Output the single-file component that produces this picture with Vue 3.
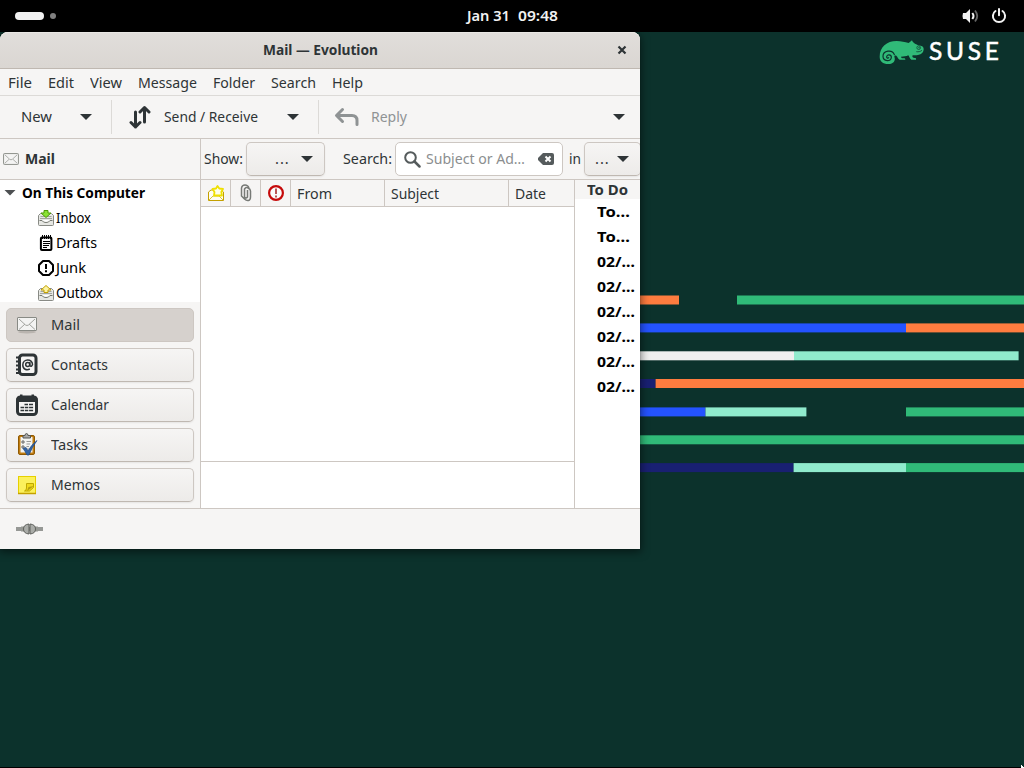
<script setup>
const menus = [['File', 24], ['Edit', 26], ['View', 32], ['Message', 59], ['Folder', 42], ['Search', 45], ['Help', 31]]
const folders = [['inbox', 'Inbox', 35], ['drafts', 'Drafts', 41], ['junk', 'Junk', 30], ['outbox', 'Outbox', 47]]
const views = [['mail', 'Mail', 29], ['contacts', 'Contacts', 57], ['calendar', 'Calendar', 58], ['tasks', 'Tasks', 37], ['memos', 'Memos', 49]]
const todos = [['To…', 33], ['To…', 33], ['02/…', 38], ['02/…', 38], ['02/…', 38], ['02/…', 38], ['02/…', 38], ['02/…', 38]]

const stripes = [
  { y: 295.5, parts: [[600, 679, '#fe7c3f'], [737, 1024, '#30ba78']] },
  { y: 323.4, parts: [[600, 906, '#2453ff'], [906, 1024, '#fe7c3f']] },
  { y: 351.3, parts: [[600, 794, '#efefef'], [794, 1018.6, '#90ebcd']] },
  { y: 379, parts: [[600, 655.6, '#192072'], [655.6, 1024, '#fe7c3f']] },
  { y: 407.4, parts: [[600, 705.5, '#2453ff'], [705.5, 806.4, '#90ebcd'], [906, 1024, '#30ba78']] },
  { y: 435.3, parts: [[600, 1024, '#30ba78']] },
  { y: 463.1, parts: [[600, 793.6, '#192072'], [793.6, 906, '#90ebcd'], [906, 1024, '#30ba78']] },
]

// Condenses a label horizontally so it fills the given width.
const vFit = {
  mounted(el, { value }) {
    const natural = el.getBoundingClientRect().width
    el.style.transform = `scaleX(${value / natural})`
    el.style.marginRight = `${value - natural}px`
  },
}
</script>

<template>
  <div class="desktop">
    <svg class="wallpaper" width="1024" height="768">
      <g v-for="(s, i) in stripes" :key="i">
        <rect v-for="(p, j) in s.parts" :key="j" :x="p[0]" :y="s.y" :width="p[1] - p[0]" height="9" :fill="p[2]" />
      </g>
      <rect x="0" y="767" width="1024" height="1" fill="#000" />
      <path d="M1021 765h1v1h1v1h1v1h-3z" fill="#fff" />
    </svg>

    <div class="brand">
      <svg width="46" height="26" viewBox="0 0 138 78">
        <path fill="#30ba78" d="M5 53C5 24 26 6 56 6c14 0 24 3 36 6l10-8c2 5 5 8 9 10 7 3 13 6 17 6 7 1 9 5 9 11 0 9-6 15-17 17-6 1-11 0-16 1-3 5 1 8 6 8 4 0 5 2 4 5H100c-5-2-5-9-9-13-7 3-14 4-22 4 1 5 4 5 9 5 3 0 4 2 4 4H65c-5-2-6-8-10-12-4-1-6 0-6 3 5 12-3 22-18 22C14 75 5 66 5 53Z" />
        <path d="M49 47C43 30 15 34 15 52c0 16 25 17 25 3 0-9-14-10-14-1 0 3 4 5 6 2" fill="none" stroke="#0c322c" stroke-width="3.600" stroke-linecap="round" />
        <path d="M115 38c6 1 12 0 17-4" fill="none" stroke="#0c322c" stroke-width="2.200" />
        <circle cx="122" cy="26" r="5.500" fill="none" stroke="#0c322c" stroke-width="2" /><circle cx="123" cy="26" r="1.800" fill="#0c322c" />
      </svg>
      <span>SUSE</span>
    </div>

    <header class="panel">
      <div class="workspaces"><i class="pill" /><i class="dot" /></div>
      <div class="clock"><span v-fit="43">Jan 31</span><span v-fit="40">09:48</span></div>
      <div class="status">
        <svg width="18" height="16" viewBox="0 0 18 16"><path d="M1 5h3l4-4v14l-4-4H1Q0 8 1 5Z" fill="#f2f2f2" /><path d="M10.300 5q2.400 3 0 6" fill="none" stroke="#f2f2f2" stroke-width="2" /><path d="M13 2.500q4.500 5.500 0 11" fill="none" stroke="#666" stroke-width="1.800" /></svg>
        <svg width="16" height="16" viewBox="0 0 16 16" fill="none" stroke="#f2f2f2" stroke-width="2"><path d="M4.500 3a6.100 6.100 0 1 0 7 0M8 1v6.300" stroke-linecap="round" /></svg>
      </div>
    </header>

    <main class="window">
      <div class="titlebar">
        <b v-fit="115">Mail — Evolution</b>
        <svg class="close" width="10" height="10" viewBox="0 0 10 10"><path d="m1.500 1.500 7 7m0-7-7 7" stroke="#2e3436" stroke-width="2.200" /></svg>
      </div>
      <nav class="menubar"><span v-for="m in menus" :key="m[0]" v-fit="m[1]">{{ m[0] }}</span></nav>

      <div class="toolbar">
        <div class="tool new"><span v-fit="31">New</span><i class="caret" /></div>
        <i class="sep" />
        <div class="tool send">
          <svg width="24" height="24" viewBox="0 0 24 24" fill="none" stroke="#2e3436" stroke-width="3"><path d="M7.500 7v15M3 17.500l4.500 4.500 4.500-4.500M16.500 17V2.500M12 7l4.500-4.500L21 7" stroke-linejoin="round" stroke-linecap="round" /></svg>
          <span v-fit="94">Send / Receive</span><i class="caret" />
        </div>
        <i class="sep" />
        <div class="tool reply">
          <svg width="25" height="20" viewBox="0 0 25 20" fill="none" stroke="#8f9394" stroke-width="3"><path d="M8.500 2.500 2.500 8.500l6 6M3 8.500H18q5 0 5 5v4" stroke-linejoin="round" stroke-linecap="round" /></svg>
          <span v-fit="36">Reply</span>
        </div>
        <i class="caret last" />
      </div>

      <div class="content">
        <aside class="sidebar">
          <div class="side-head">
            <svg width="16" height="12" viewBox="0 0 20 15"><rect x=".7" y=".7" width="18.600" height="13.600" rx="1" fill="#f4f4f3" stroke="#8b8e88" stroke-width="1.200" /><path d="m2 2 6.500 6q1.500 1 3 0L18 2M2 13l5.500-5M18 13l-5.500-5" fill="none" stroke="#9a9c98" /></svg>
            <b v-fit="30">Mail</b>
          </div>
          <div class="tree">
            <div class="row root"><i class="caret grey" /><b v-fit="123">On This Computer</b></div>
            <div v-for="f in folders" :key="f[0]" class="row">
              <svg width="16" height="16" viewBox="0 0 16 16">
                <template v-if="f[0] === 'inbox' || f[0] === 'outbox'">
                  <path d="M2.500 3.500h11l2 2v9q0 1-1 1h-13q-1 0-1-1v-9Z" fill="#e6e7e3" stroke="#888a85" />
                  <path d="M2.500 6.500h11M2 8.500h12" stroke="#a3a59f" /><path d="M1.500 10.500H4q1 2 4 2t4-2h2.500" fill="none" stroke="#73766f" /><path d="M4.500 10h7q-1 1.800-3.500 1.800T4.500 10Z" fill="#fff" />
                  <path v-if="f[0] === 'inbox'" d="M6 .5h4v2.500h3L8 7.500 3 3h3Z" fill="#8ae234" stroke="#4e9a06" />
                  <path v-else d="M6 7.500h4V5h3L8 .5 3 5h3Z" fill="#fcf4a3" stroke="#c4a000" />
                </template>
                <template v-else-if="f[0] === 'drafts'">
                  <rect x="2.900" y="2.400" width="10.500" height="12.600" rx="1" fill="#fff" stroke="#000" stroke-width="2" /><path d="M4.500 0v4M6.500 0v4M8.500 0v4M10.500 0v4M12.500 0v4" stroke="#000" /><path d="M5 6.500h7M5 8.500h7M5 10.500h6M5 12.500h4" stroke="#000" />
                </template>
                <template v-else><path d="M5 1h6l4 4v6l-4 4H5l-4-4V5Z" fill="#fff" stroke="#000" stroke-width="2" stroke-linejoin="round" /><path d="M8 4v5M8 10.300v2" stroke="#000" stroke-width="2" /></template>
              </svg>
              <span v-fit="f[2]">{{ f[1] }}</span>
            </div>
          </div>
          <div class="switcher">
            <button v-for="(v, i) in views" :key="v[0]" :class="{ active: i === 0 }">
              <svg v-if="v[0] === 'mail'" width="24" height="24" viewBox="0 0 24 24"><ellipse cx="12" cy="19" rx="9" ry="1.500" fill="#b9b4af" /><rect x="2.500" y="4.500" width="19" height="13" rx=".5" fill="#f3f3f2" stroke="#888a85" /><path d="m4 6 6.500 6q1.500 1 3 0L20 6M4 16.500l6-5.500M20 16.500 14 11" fill="none" stroke="#a2a39f" /></svg>
              <svg v-else-if="v[0] === 'contacts'" width="24" height="24" viewBox="0 0 24 24"><path d="M1 4.500h4M1 8.500h4M1 12.500h4M1 16.500h4M1 20h4" stroke="#2e3436" stroke-width="2" /><rect x="4.500" y="2" width="16.500" height="19.500" rx="3" fill="#f6f5f4" stroke="#2e3436" stroke-width="3" /><circle cx="12.700" cy="11.500" r="2" fill="none" stroke="#2e3436" stroke-width="1.500" /><path d="M14.800 9v3.500q1.500 2 2.700-1c0-6-9.700-6-9.700.500 0 4.500 4 5.500 7 4" fill="none" stroke="#2e3436" stroke-width="1.500" /></svg>
              <svg v-else-if="v[0] === 'calendar'" width="24" height="24" viewBox="0 0 24 24"><rect x="2.500" y="4" width="19" height="17.500" rx="3" fill="#f6f5f4" stroke="#2e3436" stroke-width="3" /><path d="M1.500 9V6q0-3 4-3h13q4 0 4 3v3ZM5 1.500h2.500V4H5ZM16.500 1.500H19V4h-2.500Z" fill="#2e3436" /><path d="M9.500 11.500H13m1 0h4M5.500 14.500H9m.8 0h3.500m.8 0h4M5.500 17.500H9m.8 0h3.500m.8 0h4" stroke="#2e3436" stroke-width="1.700" /></svg>
              <svg v-else-if="v[0] === 'tasks'" width="24" height="24" viewBox="0 0 24 24"><rect x="3.500" y="2.500" width="16" height="19" rx="1.500" fill="#c17d11" stroke="#8f5902" /><rect x="5.500" y="4" width="12" height="15.500" fill="#f4f4f2" /><path d="M8 5V2.500h2q0-2 1.500-2t1.500 2h2.500V5Z" fill="#aaa" stroke="#555753" /><path d="M7 8h2v2H7ZM7 13h2v2H7Z" fill="none" stroke="#666" /><path d="M11.500 8.500H16M11.500 11H15M11.500 13.500H14M11.500 16H14" stroke="#999" /><path d="m8 15.500 3-1 2 3.500Q16 12 22 7.500 17 14 14 22h-2Q10 18 8 15.500Z" fill="#3465a4" stroke="#204a87" stroke-width=".7" /></svg>
              <svg v-else width="24" height="24" viewBox="0 0 24 24"><rect x="3.500" y="3.500" width="17" height="17" fill="#fcf15c" stroke="#e6d000" /><path d="M3 20.500h18" stroke="#c4a000" stroke-width="1.500" /><path d="M11.500 15v-4.500h7v4l-4 3.500H9.500q2-.5 2-3Z" fill="#f0da1c" stroke="#c0a800" /><path d="m12 18 1.500-4 5.500-1Z" fill="#b5a011" /></svg>
              <span v-fit="v[2]">{{ v[1] }}</span>
            </button>
          </div>
        </aside>

        <section class="main">
          <div class="searchbar">
            <span v-fit="39" class="show">Show:</span>
            <div class="combo"><span class="dots">...</span><i class="caret" /></div>
            <span v-fit="49" class="search-label">Search:</span>
            <div class="entry">
              <svg width="17" height="17" viewBox="0 0 17 17" fill="none" stroke="#555b5c" stroke-width="2"><circle cx="6.500" cy="6.500" r="5.300" /><path d="m10.500 10.500 5 5" stroke-width="2.500" stroke-linecap="round" /></svg>
              <span v-fit="99" class="hint">Subject or Ad…</span>
              <svg class="clear" width="16" height="12" viewBox="0 0 16 12"><path d="M5 0h9q2 0 2 2v8q0 2-2 2H5L0 7V5Z" fill="#555b5c" /><path d="m7.500 3.500 5 5m0-5-5 5" stroke="#fff" stroke-width="2" /></svg>
            </div>
            <span v-fit="12" class="in">in</span>
            <div class="combo small"><span class="dots">...</span><i class="caret" /></div>
          </div>
          <div class="panes">
            <div class="messages">
              <div class="columns">
                <div class="ic"><svg width="18" height="18" viewBox="0 0 18 18"><path d="M1.500 8v8.500h15V8L14 6H4Z" fill="#fffdf0" stroke="#c4a000" /><path d="m2 16 4-4h6l4 4" fill="none" stroke="#d8c53c" /><path d="m10.500 2 1.800 2.500 3.700.5-1.700 3 .7 3.500H7L7.500 8 5.500 5l3.500-.5Z" fill="#fffee8" stroke="#efe000" stroke-width="1.800" stroke-linejoin="round" /></svg></div>
                <div class="ic"><svg width="12" height="18" viewBox="0 0 12 18" fill="none" stroke="#777a76" stroke-width="1.500"><path d="M7.500 6v7q-1.500 2-3 0V5q1.500-2.500 3.500-1Q10.500 5 10.500 7v6q0 3-2 3.500t-4-1.500L1.500 12V4Q2 1 5 1t4 3" /></svg></div>
                <div class="ic"><svg width="18" height="18" viewBox="0 0 18 18"><circle cx="9" cy="9" r="6.900" fill="#fbfbfb" stroke="#c50a0a" stroke-width="2.200" /><path d="M9 4.500V10m0 1.500v2" stroke="#b55" stroke-width="2" /></svg></div>
                <div class="from"><span v-fit="35">From</span></div>
                <div class="subject"><span v-fit="48">Subject</span></div>
                <div class="date"><span v-fit="31">Date</span></div>
              </div>
              <div class="list" />
              <div class="preview" />
            </div>
            <div class="todo">
              <div class="todo-head"><b v-fit="41">To Do</b></div>
              <div v-for="(t, i) in todos" :key="i" class="todo-row"><b v-fit="t[1]">{{ t[0] }}</b></div>
            </div>
          </div>
        </section>
      </div>

      <footer class="footer">
        <svg width="28" height="14" viewBox="0 0 28 14"><path d="M0 6h27M0 8h27" stroke="#777975" stroke-width="1.500" /><path d="M5 4.500h4v5H5ZM18 4.500h4v5h-4Z" fill="#969893" /><path d="M13 2q-5.500.5-5.500 5t5.500 5ZM14 2q5.500.5 5.500 5T14 12Z" fill="#aaaca8" stroke="#5f615d" /></svg>
      </footer>
    </main>
  </div>
</template>

<style>
body { margin: 0; overflow: hidden; }
</style>

<style scoped>
* { box-sizing: border-box; }
.desktop { position: relative; width: 1024px; height: 768px; overflow: hidden; background: #0c322c; color: #2e3436; font: 14.67px/20px "Noto Sans", sans-serif; }
.desktop span, .desktop b { display: block; white-space: pre; flex: none; transform-origin: 0 50%; padding-bottom: 2px; }
.wallpaper { position: absolute; inset: 0; }
.brand { position: absolute; left: 878px; top: 39px; display: flex; gap: 5px; color: #fff; }
.brand span { font: 24.5px/24px Lato, sans-serif; letter-spacing: 3.7px; -webkit-text-stroke: .5px #fff; }
.panel { position: relative; height: 32px; background: #000; color: #f2f2f2; display: flex; align-items: center; justify-content: space-between; padding: 0 17px 0 15px; }
.workspaces { display: flex; align-items: center; gap: 6px; width: 120px; }
.pill { width: 29px; height: 8px; border-radius: 4px; background: #f2f2f2; }
.dot { width: 6px; height: 6px; border-radius: 50%; background: #808080; }
.clock { position: absolute; left: 467px; display: flex; gap: 8px; font-weight: 600; }
.status { display: flex; align-items: center; gap: 11px; }
.window { position: relative; width: 640px; height: 517px; border-radius: 8px 8px 0 0; background: #f6f5f4; box-shadow: 0 2px 8px 1px rgba(0, 0, 0, .5), 0 0 1px rgba(0, 0, 0, .6); display: flex; flex-direction: column; }
.titlebar { height: 37px; flex: none; border-bottom: 1px solid #bfb8b1; border-radius: 8px 8px 0 0; background: linear-gradient(#e1dedb, #dad6d2); box-shadow: inset 0 1px #e9e7e4; display: flex; align-items: center; justify-content: center; position: relative; }
.close { position: absolute; left: 617px; top: 13px; }
.menubar { height: 27px; flex: none; border-bottom: 1px solid #dcdad7; display: flex; align-items: center; gap: 16px; padding: 2px 0 0 8px; }
.toolbar { height: 43px; flex: none; border-bottom: 1px solid #cdc7c2; display: flex; align-items: center; }
.tool { display: flex; align-items: center; height: 42px; }
.new { width: 111px; padding-left: 21px; gap: 28px; }
.sep { width: 1px; height: 34px; background: #dcdad7; }
.send { width: 206px; padding-left: 16px; gap: 12px; }
.send .caret { margin-left: 17px; }
.reply { padding-left: 15px; gap: 12px; color: #8f9394; }
.caret { flex: none; width: 12px; height: 6px; background: #2e3436; clip-path: polygon(0 0, 100% 0, 50% 100%); }
.last { margin-left: auto; margin-right: 15px; }
.content { height: 369px; flex: none; display: flex; }
.sidebar { width: 200px; display: flex; flex-direction: column; }
.side-head { height: 41px; flex: none; border-bottom: 1px solid #cdc7c2; display: flex; align-items: center; padding-left: 3px; gap: 6px; }
.tree { height: 122px; overflow: hidden; background: #fff; color: #000; }
.row { display: flex; align-items: center; height: 25px; padding-left: 38px; gap: 2px; }
.root { padding-left: 4px; gap: 6px; }
.grey { background: #4d5052; }
.switcher { display: flex; flex-direction: column; gap: 6px; padding: 6px; }
button { display: flex; align-items: center; height: 34px; margin: 0; padding: 0 0 0 8px; gap: 12px; border: 1px solid #cdc7c2; border-bottom-color: #bfb8b1; border-radius: 5px; background: linear-gradient(#f6f5f4, #edebe9); box-shadow: 0 1px 2px rgba(0, 0, 0, .07); font: inherit; color: inherit; }
button.active { background: #d6d1cd; border-color: #cdc7c2; box-shadow: none; }
.main { width: 440px; border-left: 1px solid #cdc7c2; display: flex; flex-direction: column; }
.searchbar { height: 41px; flex: none; border-bottom: 1px solid #cdc7c2; display: flex; align-items: center; padding-left: 3px; overflow: hidden; }
.combo { flex: none; margin-left: 3px; width: 79px; height: 34px; border: 1px solid #cdc7c2; border-bottom-color: #bfb8b1; border-radius: 5px; background: linear-gradient(#f6f5f4, #edebe9); box-shadow: 0 1px 2px rgba(0, 0, 0, .07); display: flex; align-items: center; padding-left: 28px; }
.dots { width: 26px; letter-spacing: 1px; }
.small { width: 57px; padding-left: 10px; }
.small .dots { width: 22px; }
.search-label { margin-left: 18px; }
.entry { flex: none; margin-left: 3px; width: 168px; height: 34px; border: 1px solid #cdc7c2; border-radius: 5px; background: #fff; display: flex; align-items: center; padding: 0 8px; }
.hint { margin-left: 5px; color: #8b8e8f; }
.clear { margin-left: auto; }
.in { margin-left: 6px; }
.panes { display: flex; flex: 1; background: #fff; }
.messages { width: 374px; border-right: 1px solid #cdc7c2; display: flex; flex-direction: column; }
.columns { display: flex; height: 27px; background: #f6f5f4; border-bottom: 1px solid #cdc7c2; }
.columns div { display: flex; align-items: center; border-right: 1px solid #cdc7c2; padding: 2px 0 0 6px; }
.columns .ic { width: 30px; justify-content: center; padding: 0; }
.columns .from { width: 94px; }
.columns .subject { width: 124px; }
.columns .date { border: 0; }
.list { height: 255px; border-bottom: 1px solid #cdc7c2; }
.todo { width: 65px; color: #000; }
.todo-head { height: 19px; line-height: 19px; padding-left: 12px; background: #f6f5f4; color: #2e3436; display: flex; }
.todo-row { height: 25px; padding-left: 22px; display: flex; align-items: center; }
.footer { height: 41px; border-top: 1px solid #cdc7c2; display: flex; align-items: center; padding-left: 16px; }
</style>
